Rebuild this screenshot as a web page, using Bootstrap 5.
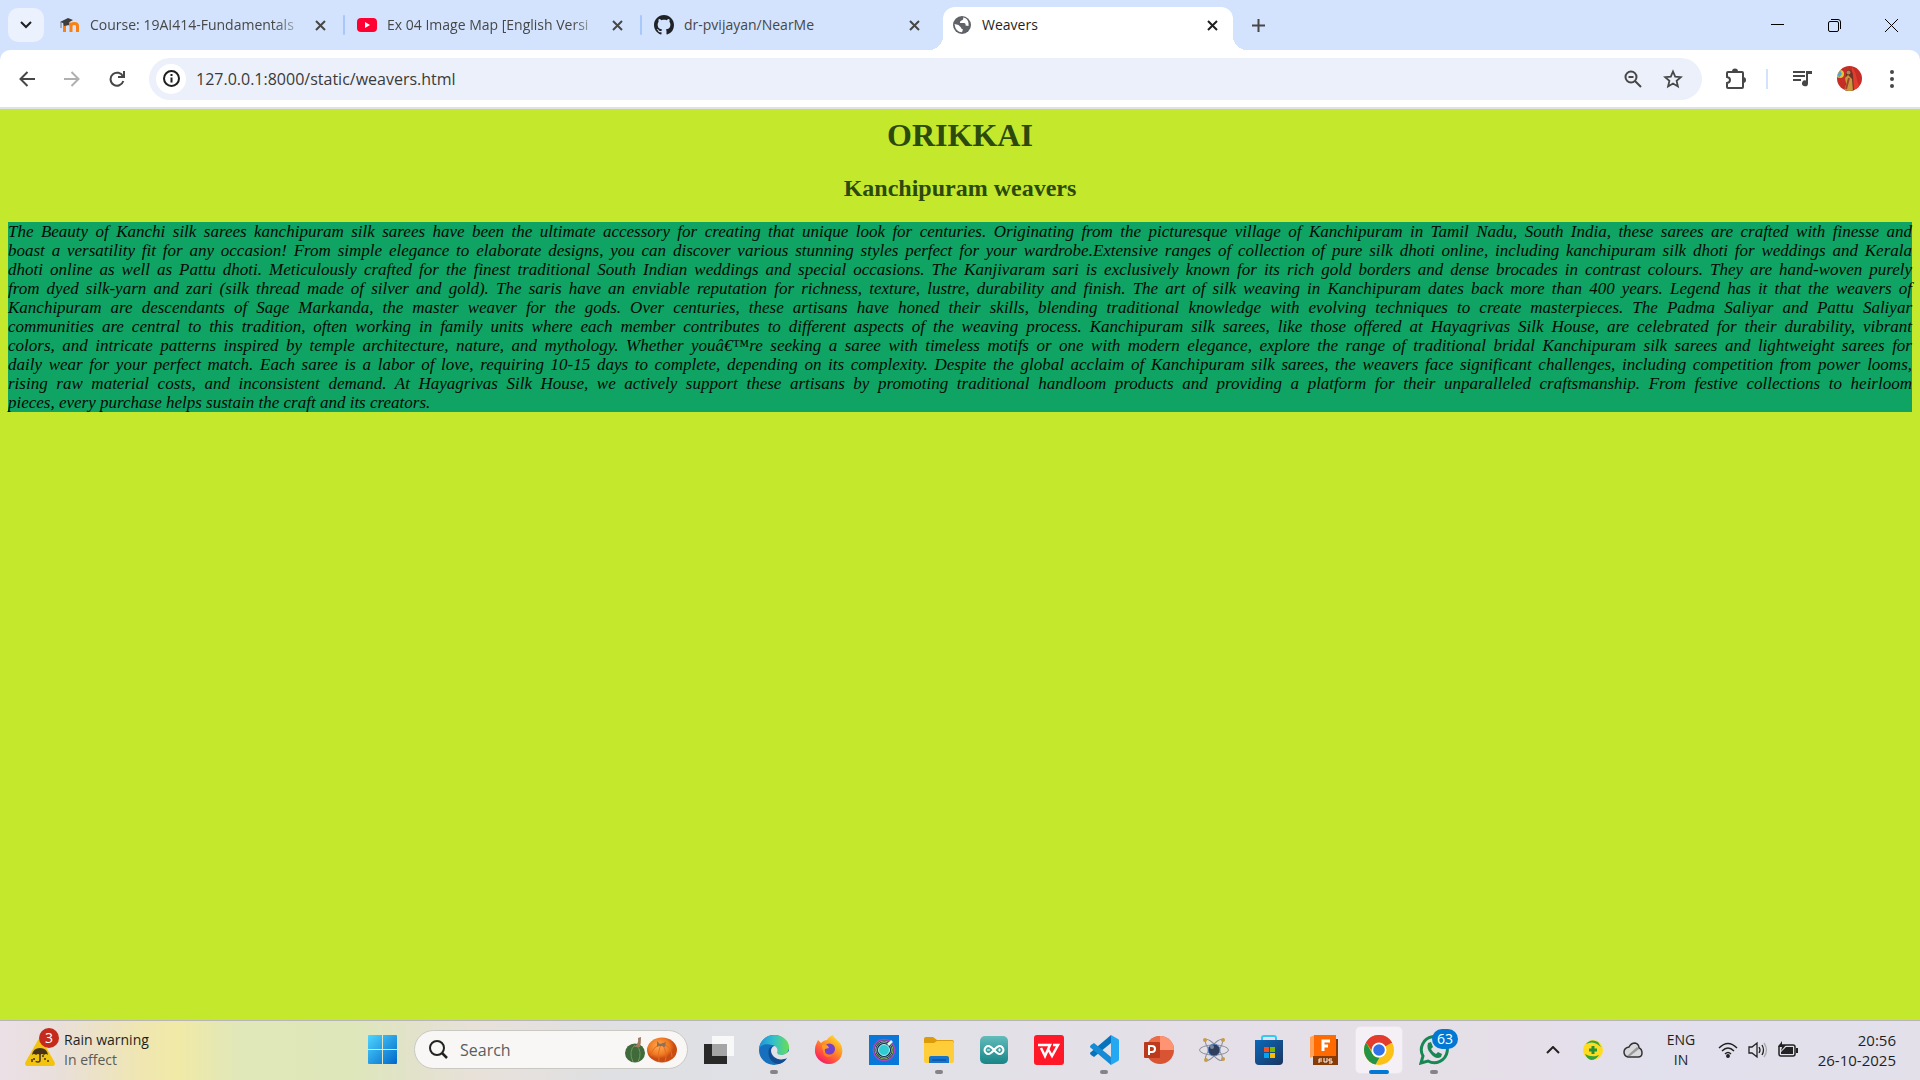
<!DOCTYPE html>
<html lang="en">
<head>
<meta charset="utf-8">
<meta name="viewport" content="width=device-width, initial-scale=1">
<title>Weavers</title>
<link rel="stylesheet" href="https://cdn.jsdelivr.net/npm/bootstrap@5.3.0/dist/css/bootstrap.min.css">
<style>
  body { font-family: "Open Sans", "Noto Sans", sans-serif; font-size: 14px; color: #1f1f1f; }
  svg { display: block; flex: none; }
  button { color: inherit; }
  .plain { border: 0; padding: 0; background: none; display: flex; align-items: center; justify-content: center; flex: none; }

  /* tab strip */
  .tabstrip { background: #d3e3fd; height: 50px; padding-left: 8px; }
  .tab-search { width: 36px; height: 34px; border-radius: 10px; background: #ebf1fd; margin: 8px 8px 0 0; }
  .page-tab { width: 297px; height: 50px; padding: 0 19px 0 8px; color: #474747; position: relative; }
  .page-tab + .page-tab:not(.current)::before { content: ""; width: 2px; height: 20px; background: #a8c7fa; border-radius: 1px; position: absolute; left: -6px; top: 15px; }
  .page-tab .plain { height: 50px; }
  .page-tab .title { flex: 1 1 0; min-width: 0; overflow: hidden; white-space: nowrap; text-align: left; line-height: 20px; }
  .page-tab .fades { -webkit-mask-image: linear-gradient(90deg, #000 88%, rgba(0, 0, 0, .2)); mask-image: linear-gradient(90deg, #000 88%, rgba(0, 0, 0, .2)); }
  .page-tab .open-tab { flex: 1 1 0; min-width: 0; gap: 10px; }
  .page-tab .close-tab { width: 20px; margin-left: 10px; }
  .current { width: 290px; height: 43px; background: #fff; color: #1f1f1f; border-radius: 12px 12px 0 0; padding-left: 9px; padding-right: 11px; align-self: flex-end; }
  .current .plain { height: 40px; padding-bottom: 4px; }
  .current::before, .current::after { content: ""; position: absolute; bottom: 0; width: 14px; height: 14px; }
  .current::before { left: -14px; background: radial-gradient(circle at 0 0, transparent 14px, #fff 14px); }
  .current::after { right: -14px; background: radial-gradient(circle at 100% 0, transparent 14px, #fff 14px); }
  .new-tab { width: 50px; height: 50px; }
  .window-btn { width: 57px; height: 50px; }

  /* toolbar */
  .corners { background: #d3e3fd; }
  .toolbar { background: #fff; height: 57px; border-radius: 10px 10px 0 0; padding: 0 6px 0 4px; }
  .nav-icon { width: 45px; height: 42px; color: #474747; }
  .omnibox { height: 42px; border-radius: 21px; background: #ecf0fa; margin: 0 14px 0 10px; padding: 0 9px 0 7px; }
  .site-info { width: 30px; height: 30px; border-radius: 50%; background: #fff; color: #1f1f1f; }
  .omnibox input { border: 0; outline: 0; background: none; flex: 1 1 0; min-width: 0; padding: 0; margin-left: 10px; font-size: 16px; line-height: 24px; color: #3a3a3a; }
  .omni-icon { width: 40px; height: 42px; color: #474747; }
  .divider { width: 2px; height: 20px; background: #d3e3fd; margin: 0 12px 0 10px; }
  .edge-line { height: 2px; background: #dfe1e5; }

  /* page */
  .page { background: #c4e82c; padding: 0 8px; color: #2c4a0c; overflow: hidden; }
  .page h1, .page h2 { font-family: "Liberation Serif", "Times New Roman", serif; font-weight: 700; text-align: center; margin: 0; }
  .page h1 { font-size: 32px; line-height: 37px; margin-top: 8px; }
  .page h2 { font-size: 24px; line-height: 28px; margin: 20px 0; }
  .page p { background: #10a464; color: #020a05; font-family: "Liberation Serif", Georgia, serif; font-style: italic; font-size: 17px; line-height: 19px; text-align: justify; text-align-last: justify; margin: 0; }
  .page .ending { display: block; text-align-last: left; }

  /* taskbar */
  .taskbar { height: 60px; padding-bottom: 2px; border-top: 1px solid #b9b3bb; background: linear-gradient(90deg, #ebe0e6 0, #e9dfda 60px, #efe6b2 140px, #f0eaa6 178px, #e1e7b8 235px, #dee7ba 350px, #e2e2cb 415px, #e8e1da 480px, #dee0e4 620px, #e2e1e7 900px, #e5dfe8 1300px, #e6dfe9 1520px, #e1e0ed 1650px, #e3e0ea 100%); font-size: 14px; line-height: 20px; }
  .weather { width: 355px; padding-left: 25px; gap: 9px; }
  .weather .muted { color: #5c5b55; }
  .weather-icon { position: relative; width: 30px; height: 40px; padding-top: 8px; }
  .count { position: absolute; border-radius: 10px; height: 20px; min-width: 20px; line-height: 20px; color: #fff; text-align: center; }
  .count-red { background: #c42b1c; left: 14px; top: -2px; }
  .count-blue { background: #0078d4; width: 26px; left: 26px; top: 9px; }
  .task { width: 55px; height: 59px; position: relative; }
  .task.running::after { content: ""; position: absolute; bottom: 5px; left: 24px; width: 8px; height: 4px; border-radius: 2px; background: #858387; }
  .task.focused::before { content: ""; position: absolute; left: 4px; top: 6px; width: 48px; height: 48px; border-radius: 5px; background: #f4f0f6; border: 1px solid #eae5ec; }
  .task.focused::after { width: 20px; left: 18px; background: #0078d4; }
  .task svg { position: relative; }
  .finder { width: 274px; height: 39px; border-radius: 20px; background: #f8f7f5; border: 1px solid #c9c8c3; margin: 0 3px 0 4px; padding: 0 10px 0 14px; }
  .finder input { border: 0; outline: 0; background: none; flex: 1 1 0; min-width: 0; font-size: 16px; line-height: 24px; padding: 0; margin-left: 12px; color: #5d5d5d; }
  .finder input::placeholder { color: #5d5d5d; opacity: 1; }
  .tray { padding-right: 24px; }
  .tray-app { width: 40px; height: 59px; }
  .language { width: 56px; text-align: center; }
  .quick { gap: 10px; margin-left: 9px; }
  .clock { width: 98px; text-align: right; font-size: 15px; }
</style>
<script src="https://cdn.jsdelivr.net/npm/bootstrap@5.3.0/dist/js/bootstrap.bundle.min.js"></script>
</head>
<body class="d-flex flex-column vh-100 overflow-hidden">

<header>
  <div class="tabstrip d-flex">
    <button class="plain tab-search" aria-label="Search tabs"><svg width="12" height="8" viewBox="0 0 12 8" fill="none" stroke="#1f1f1f" stroke-width="2"><path d="M1 1l5 5 5-5"/></svg></button>
    <div class="page-tab d-flex">
      <button class="plain open-tab">
        <svg width="20" height="20" viewBox="0 0 20 20"><path d="M4.500 17v-6q0-2.500 3.200-2.500 3.300 0 3.300 2.500v6m0-6q0-2.500 3.300-2.500 3.200 0 3.200 2.500v6" fill="none" stroke="#f98012" stroke-width="3"/><path d="M0 7l8-4 5 2-7 4zM3 8l6-1v3l-5 1z" fill="#3d3d3d"/><path d="M1 7v6" stroke="#777"/></svg>
        <span class="title fades">Course: 19AI414-Fundamentals</span></button>
      <button class="plain close-tab" aria-label="Close tab"><svg width="11" height="11" viewBox="0 0 11 11" stroke="currentColor" stroke-width="2"><path d="M1 1l9 9M10 1l-9 9"/></svg></button>
    </div>
    <div class="page-tab d-flex">
      <button class="plain open-tab">
        <svg width="20" height="14" viewBox="0 0 20 14"><rect width="20" height="14" rx="4" fill="#ff0033"/><path d="M8 4l5 3-5 3z" fill="#fff"/></svg>
        <span class="title fades">Ex 04 Image Map [English Versi</span></button>
      <button class="plain close-tab" aria-label="Close tab"><svg width="11" height="11" viewBox="0 0 11 11" stroke="currentColor" stroke-width="2"><path d="M1 1l9 9M10 1l-9 9"/></svg></button>
    </div>
    <div class="page-tab d-flex">
      <button class="plain open-tab">
        <svg width="20" height="20" viewBox="0 0 16 16" fill="#1f2328"><path d="M8 0C3.580 0 0 3.580 0 8c0 3.540 2.290 6.530 5.470 7.590.4.070.55-.17.55-.38 0-.19-.010-.820-.010-1.490-2.010.37-2.530-.49-2.690-.94-.09-.23-.48-.94-.82-1.130-.28-.15-.68-.52-.010-.53.63-.010 1.080.58 1.230.82.72 1.210 1.870.87 2.330.66.070-.52.28-.87.51-1.070-1.780-.2-3.640-.89-3.640-3.950 0-.87.31-1.590.82-2.150-.080-.2-.36-1.020.080-2.120 0 0 .67-.21 2.200.82.64-.18 1.320-.27 2-.27s1.360.090 2 .27c1.530-1.040 2.200-.82 2.200-.82.44 1.100.16 1.920.080 2.120.51.56.82 1.270.82 2.150 0 3.070-1.870 3.750-3.650 3.950.29.25.54.73.54 1.480 0 1.070-.010 1.930-.010 2.200 0 .21.15.46.55.38A8 8 0 0 0 16 8c0-4.420-3.580-8-8-8z"/></svg>
        <span class="title">dr-pvijayan/NearMe</span></button>
      <button class="plain close-tab" aria-label="Close tab"><svg width="11" height="11" viewBox="0 0 11 11" stroke="currentColor" stroke-width="2"><path d="M1 1l9 9M10 1l-9 9"/></svg></button>
    </div>
    <div class="page-tab current d-flex">
      <button class="plain open-tab">
        <svg width="20" height="20" viewBox="0 0 20 20"><circle cx="10" cy="10" r="9" fill="#5f6368"/><path d="M11 2.500q1 2-1.500 3-2 .5-1.500 2.500h4q2 0 1.500 2.500l3 .5q.5-5-2-7-1-1.200-3.500-1.500zM2.500 9l4 1 2.500 2.500q0 1.500 2 2l-1 2.800Q3.500 17 2.500 9z" fill="#fff"/></svg>
        <span class="title">Weavers</span></button>
      <button class="plain close-tab" aria-label="Close tab"><svg width="11" height="11" viewBox="0 0 11 11" stroke="currentColor" stroke-width="2"><path d="M1 1l9 9M10 1l-9 9"/></svg></button>
    </div>
    <button class="plain new-tab" aria-label="New tab"><svg width="13" height="13" viewBox="0 0 13 13" stroke="#474747" stroke-width="2"><path d="M6.500 0v13M0 6.500h13"/></svg></button>
    <div class="d-flex ms-auto">
      <button class="plain window-btn" aria-label="Minimize"><svg width="13" height="13" viewBox="0 0 13 13"><path d="M0 5.500h13" stroke="#000"/></svg></button>
      <button class="plain window-btn" aria-label="Restore"><svg width="13" height="13" viewBox="0 0 13 13" fill="none" stroke="#000"><rect x=".5" y="2.500" width="10" height="10" rx="1.500"/><path d="M3 .5h7a2.500 2.500 0 0 1 2.500 2.500v7"/></svg></button>
      <button class="plain window-btn" aria-label="Close"><svg width="13" height="13" viewBox="0 0 13 13" stroke="#000"><path d="M0 0l13 13M13 0L0 13"/></svg></button>
    </div>
  </div>

  <div class="corners">
  <div class="toolbar d-flex align-items-center">
    <button class="plain nav-icon" aria-label="Back"><svg width="16" height="16" viewBox="0 0 16 16" fill="none" stroke="currentColor" stroke-width="2"><path d="M16 8H2M8.500 1l-7 7 7 7"/></svg></button>
    <button class="plain nav-icon" aria-label="Forward" disabled><svg width="16" height="16" viewBox="0 0 16 16" fill="none" stroke="#b0b0b0" stroke-width="2"><path d="M0 8h14M7.500 1l7 7-7 7"/></svg></button>
    <button class="plain nav-icon" aria-label="Reload"><svg width="16" height="16" viewBox="0 0 16 16" fill="none" stroke="currentColor" stroke-width="2"><path d="M14 5.500A6.500 6.500 0 1 0 14.300 10M15 0v6H9"/></svg></button>
    <div class="omnibox d-flex align-items-center flex-grow-1">
      <button class="plain site-info" aria-label="Site information"><svg width="17" height="17" viewBox="0 0 17 17" fill="none" stroke="currentColor" stroke-width="2"><circle cx="8.500" cy="8.500" r="7.500"/><path d="M8.500 7.500v5M8.500 4v2"/></svg></button>
      <input type="text" aria-label="Address" value="127.0.0.1:8000/static/weavers.html">
      <button class="plain omni-icon" aria-label="Zoom"><svg width="18" height="18" viewBox="0 0 18 18" fill="none" stroke="currentColor" stroke-width="2"><circle cx="7" cy="7" r="5.500"/><path d="M11 11l6 6M4.500 7h5"/></svg></button>
      <button class="plain omni-icon" aria-label="Bookmark"><svg width="20" height="20" viewBox="0 0 20 20" fill="none" stroke="currentColor" stroke-width="1.800"><path d="M10 2.500l2.200 5.200 5.600.5-4.200 3.700 1.300 5.500-4.900-2.900-4.900 2.900 1.300-5.500-4.200-3.700 5.600-.5z"/></svg></button>
    </div>
    <button class="plain omni-icon" aria-label="Extensions"><svg width="22" height="22" viewBox="0 0 22 22"><path d="M3 4h14q1 0 1 1v14q0 1-1 1H3q-1 0-1-1v-4q3-.5 3-3t-3-3V5q0-1 1-1z" fill="none" stroke="#474747" stroke-width="2"/><path d="M7 3.500a3 3 0 0 1 6 0zM18 9a3 3 0 0 1 0 6z" fill="#474747"/></svg></button>
    <span class="divider"></span>
    <button class="plain nav-icon me-1" aria-label="Media controls"><svg width="20" height="18" viewBox="0 0 20 18"><path d="M0 2h12M0 6h12M0 10h8" stroke="#474747" stroke-width="2"/><path d="M13 1h6v3h-4v9.500a3 3 0 1 1-2-3z" fill="#474747"/></svg></button>
    <button class="plain omni-icon" aria-label="Profile"><svg width="25" height="25" viewBox="0 0 25 25"><defs><clipPath id="round"><circle cx="12.500" cy="12.500" r="12.500"/></clipPath></defs><g clip-path="url(#round)"><path fill="#c62d25" d="M0 0h25v25H0z"/><circle cx="3" cy="8" r="4" fill="#e7c33c"/><path d="M0 6l3-2 2 4-3 4z" fill="#55a7c6"/><path d="M15 1q4 5 5 13l3 9H15z" fill="#e33b2e"/><path d="M9 8q0-5 4-4 3 1 3 6l1 15H8z" fill="#6e3426"/><path d="M8 12l3-3 4 4 1 12H7l2-7z" fill="#c8983c"/><circle cx="11.500" cy="6.500" r="2" fill="#b88059"/><path d="M12 12l-3 11" stroke="#a6422b" stroke-width="2"/></g></svg></button>
    <button class="plain nav-icon" aria-label="Menu"><svg width="4" height="18" viewBox="0 0 4 18" fill="#474747"><circle cx="2" cy="2" r="2"/><circle cx="2" cy="9" r="2"/><circle cx="2" cy="16" r="2"/></svg></button>
  </div>
  </div>
  <div class="edge-line"></div>
</header>

<main class="page flex-grow-1">
  <h1>ORIKKAI</h1>
  <h2>Kanchipuram weavers</h2>
  <p>The Beauty of Kanchi silk sarees kanchipuram silk sarees have been the ultimate accessory for creating that unique look for centuries. Originating from the picturesque village of Kanchipuram in Tamil Nadu, South India, these sarees are crafted with finesse and<br>
  boast a versatility fit for any occasion! From simple elegance to elaborate designs, you can discover various stunning styles perfect for your wardrobe.Extensive ranges of collection of pure silk dhoti online, including kanchipuram silk dhoti for weddings and Kerala<br>
  dhoti online as well as Pattu dhoti. Meticulously crafted for the finest traditional South Indian weddings and special occasions. The Kanjivaram sari is exclusively known for its rich gold borders and dense brocades in contrast colours. They are hand-woven purely<br>
  from dyed silk-yarn and zari (silk thread made of silver and gold). The saris have an enviable reputation for richness, texture, lustre, durability and finish. The art of silk weaving in Kanchipuram dates back more than 400 years. Legend has it that the weavers of<br>
  Kanchipuram are descendants of Sage Markanda, the master weaver for the gods. Over centuries, these artisans have honed their skills, blending traditional knowledge with evolving techniques to create masterpieces. The Padma Saliyar and Pattu Saliyar<br>
  communities are central to this tradition, often working in family units where each member contributes to different aspects of the weaving process. Kanchipuram silk sarees, like those offered at Hayagrivas Silk House, are celebrated for their durability, vibrant<br>
  colors, and intricate patterns inspired by temple architecture, nature, and mythology. Whether youâ€™re seeking a saree with timeless motifs or one with modern elegance, explore the range of traditional bridal Kanchipuram silk sarees and lightweight sarees for<br>
  daily wear for your perfect match. Each saree is a labor of love, requiring 10-15 days to complete, depending on its complexity. Despite the global acclaim of Kanchipuram silk sarees, the weavers face significant challenges, including competition from power looms,<br>
  rising raw material costs, and inconsistent demand. At Hayagrivas Silk House, we actively support these artisans by promoting traditional handloom products and providing a platform for their unparalleled craftsmanship. From festive collections to heirloom
  <span class="ending">pieces, every purchase helps sustain the craft and its creators.</span></p>
</main>

<footer class="taskbar d-flex align-items-center flex-shrink-0">
  <button class="plain weather justify-content-start text-start">
    <span class="weather-icon"><svg width="30" height="28" viewBox="0 0 30 28"><path d="M13 2q2-3 4 0l12.500 22q1.500 4-2 4h-25q-3.500 0-2-4z" fill="#f2c40f"/><path d="M7 17q1-7 8-7t8 7q-2-2-4 0-2-2-4 0-2-2-4 0-2-2-4 0z" fill="#45331a"/><path d="M15 16v6q0 2-2 2t-2-1M9 20v2M20 20v2M23 22v2M18 17v2M7 21v3" fill="none" stroke="#45331a" stroke-width="1.500"/></svg><span class="count count-red">3</span></span>
    <span>Rain warning<br><span class="muted">In effect</span></span>
  </button>
  <button class="plain task" aria-label="Start"><svg width="29" height="29" viewBox="0 0 29 29"><defs><linearGradient id="win" x1="0" y1="0" x2="1" y2="1"><stop stop-color="#4fd5ff"/><stop offset="1" stop-color="#0067c9"/></linearGradient></defs><path d="M1 0h13v14H0V1q0-1 1-1zM15 0h13q1 0 1 1v13H15zM0 15h14v14H1q-1 0-1-1zM15 15h14v13q0 1-1 1H15z" fill="url(#win)"/></svg></button>
  <label class="finder d-flex align-items-center">
    <svg width="19" height="19" viewBox="0 0 19 19" fill="none" stroke="#222" stroke-width="2"><circle cx="8" cy="8" r="7"/><path d="M13 13l5 5" stroke-width="2.500"/></svg>
    <input type="search" placeholder="Search" aria-label="Search">
    <svg width="52" height="27" viewBox="0 0 52 27"><defs><radialGradient id="pk" cx=".4" cy=".35"><stop stop-color="#ffae55"/><stop offset=".7" stop-color="#f07822"/><stop offset="1" stop-color="#c94d12"/></radialGradient></defs><ellipse cx="10" cy="17" rx="10" ry="9.500" fill="#3f6b3b"/><path d="M10 9q-7 6-2 17M11 9q7 6 2 17" fill="none" stroke="#78935b"/><path d="M9 11q5-3 4-9l3-1q0 6-1 10z" fill="#a27961"/><ellipse cx="37" cy="14" rx="15" ry="12.500" fill="url(#pk)"/><path d="M36 8q-9 3-10 12M36 8q-4 8-2 18M37 8q6 8 3 18M38 8q9 3 9 13" fill="none" stroke="#e56d20"/><path d="M32 5l3 3 6-2-1 5q-5-2-8 0z" fill="#8e7257"/></svg>
  </label>
  <button class="plain task" aria-label="Task view"><svg width="30" height="28" viewBox="0 0 30 28"><path d="M0 8h23v20H0z" fill="#292929"/><path d="M8 0h22v20H8z" fill="#f8f8f8"/><path d="M8 8h15v12H8z" fill="#a5a5a5"/></svg></button>
  <button class="plain task running" aria-label="Edge"><svg width="30" height="30" viewBox="0 0 30 30"><defs><linearGradient id="eg"><stop stop-color="#1b93db"/><stop offset=".5" stop-color="#35c1c9"/><stop offset="1" stop-color="#6ade50"/></linearGradient></defs><circle cx="15" cy="15" r="15" fill="#1670bd"/><path d="M0 14C1 5 8 0 15 0c9 0 15 6 15 12 0 5-4 8-8 8-4 0-5-1-4-3 1-1 1-6-5-7C7 8 1 10 0 14z" fill="url(#eg)"/><path d="M10 14c-2 5 1 15 10 15 4-1 7-4 8-6-8 4-16-1-16-7 0-3 3-4 3-4-2-1-4 0-5 2z" fill="#124c92"/><path d="M12 15q1-4 4-4 4 3 2 7 1 2 4 2 4 0 8-4v6l-2 1C20 27 12 22 12 15z" fill="#e2e1e6"/></svg></button>
  <button class="plain task" aria-label="Firefox"><svg width="30" height="30" viewBox="0 0 30 30"><defs><linearGradient id="ff" x1=".9" y1="0" x2=".2" y2="1"><stop stop-color="#ffea35"/><stop offset=".4" stop-color="#ff9a22"/><stop offset=".8" stop-color="#ff3b4c"/><stop offset="1" stop-color="#e3157c"/></linearGradient></defs><path d="M19 0c1 4 8 6 9 13 2 9-5 16-13 16S0 22 1 14c0-4 2-6 3-9l3 3c2-2 4-3 6-3 1-2 3-4 6-5z" fill="url(#ff)"/><path d="M10 9q2 2 4 2-3 2-2 5 4 3 7-1 1 6-4 7-6 0-6-6z" fill="#ff7b1d"/><circle cx="15.500" cy="14" r="5.500" fill="#7440ce"/><path d="M8 10q3-2 6 1l1 2-4 1q-1 3 1 4-4-1-4-8z" fill="#ff9c1e"/></svg></button>
  <button class="plain task" aria-label="Camera app"><svg width="30" height="30" viewBox="0 0 30 30"><path fill="#0877d8" d="M0 0h30v30H0z"/><circle cx="15" cy="15" r="10.500" fill="#122d4c" stroke="#aa46c7" stroke-width="1.500"/><circle cx="15" cy="15" r="9" fill="none" stroke="#7fb84e"/><circle cx="15" cy="15" r="7.500" fill="none" stroke="#8b98a2"/><circle cx="15" cy="15" r="5.500" fill="#31cbd4" stroke="#aaf1ed"/><path d="M19 10l4-4" stroke="#e4f6f8" stroke-width="2.500"/></svg></button>
  <button class="plain task running" aria-label="File Explorer"><svg width="30" height="26" viewBox="0 0 30 26"><path d="M0 2q0-2 2-2h7l4 3h15q2 0 2 2v4H0z" fill="#dc9b08"/><path d="M0 6h10l3-2h15q2 0 2 2v18q0 2-2 2H2q-2 0-2-2z" fill="#ffcd3a"/><path d="M5 26v-5q0-2 2-2h16q2 0 2 2v5z" fill="#1674cc"/><path d="M8 23h14" stroke="#0a4588"/></svg></button>
  <button class="plain task" aria-label="Arduino"><svg width="28" height="28" viewBox="0 0 28 28"><defs><linearGradient id="ar" x1="0" y1="0" x2="0" y2="1"><stop stop-color="#62bcba"/><stop offset="1" stop-color="#188587"/></linearGradient></defs><rect width="28" height="28" rx="5" fill="url(#ar)"/><path d="M14 14q-5-6-8-3-3 3 0 6 3 3 8-3 5-6 8-3 3 3 0 6-3 3-8-3z" fill="none" stroke="#fff" stroke-width="2"/><path d="M7 14h3M18 14h3M19.500 12.500v3" stroke="#fff"/></svg></button>
  <button class="plain task" aria-label="WPS Office"><svg width="30" height="30" viewBox="0 0 30 30"><rect width="30" height="30" rx="3" fill="#ff1828"/><path d="M4 10h12l-5 11L7 13M14 14l4 7 6-11h-5" fill="none" stroke="#fff" stroke-width="2.500"/></svg></button>
  <button class="plain task running" aria-label="Visual Studio Code"><svg width="30" height="30" viewBox="0 0 30 30"><path d="M22 0l7 4q1 0 1 2v18q0 2-1 2l-7 4z" fill="#25a8f2"/><path d="M2 20q-2-2 0-3L22 0v8L5 22z" fill="#0873bd"/><path d="M2 10q-2 2 0 3l20 17v-8L5 8z" fill="#168bd5"/></svg></button>
  <button class="plain task" aria-label="PowerPoint"><svg width="30" height="28" viewBox="0 0 30 28"><circle cx="16" cy="14" r="14" fill="#d95432"/><path d="M16 0a14 14 0 0 0-14 14h14z" fill="#ed6c47"/><path d="M16 0a14 14 0 0 1 14 14H16z" fill="#ff9472"/><rect y="6" width="16" height="16" rx="1" fill="#bd391b"/><path d="M5 19v-9h3q3 0 3 3t-3 3H5" fill="none" stroke="#fff" stroke-width="2"/></svg></button>
  <button class="plain task" aria-label="Atom simulator"><svg width="30" height="24" viewBox="0 0 30 24" fill="none" stroke="#8b8f99"><ellipse cx="15" cy="12" rx="14.500" ry="5"/><ellipse cx="15" cy="12" rx="13" ry="4" transform="rotate(52 15 12)"/><ellipse cx="15" cy="12" rx="13" ry="4" transform="rotate(-52 15 12)"/><circle cx="15" cy="12" r="6" fill="#30405c" stroke="#5a83c8"/><circle cx="13" cy="9" r="2" fill="#7a899b" stroke="none"/><g fill="#c69c45" stroke="none"><circle cx="6" cy="2" r="2"/><circle cx="24" cy="2" r="2"/><circle cx="7" cy="22" r="2"/><circle cx="24" cy="21" r="2"/></g></svg></button>
  <button class="plain task" aria-label="Microsoft Store"><svg width="30" height="30" viewBox="0 0 30 30"><defs><linearGradient id="st" x1="0" y1="0" x2="1" y2="1"><stop stop-color="#0b69ba"/><stop offset="1" stop-color="#1b3560"/></linearGradient></defs><path d="M8 6V3q0-2 2-2h10q2 0 2 2v3" fill="none" stroke="#35c8f4" stroke-width="2"/><path d="M1 5h28v21q0 4-4 4H5q-4 0-4-4z" fill="url(#st)"/><path fill="#f25022" d="M10 12h5v5h-5z"/><path fill="#7fba00" d="M16 12h5v5h-5z"/><path fill="#00a4ef" d="M10 18h5v5h-5z"/><path fill="#ffb900" d="M16 18h5v5h-5z"/></svg></button>
  <button class="plain task" aria-label="Fusion"><svg width="28" height="30" viewBox="0 0 28 30"><path d="M0 2l5-2v21l-5 2z" fill="#ffa257"/><path d="M4 0h22v22H4z" fill="#ff6b00"/><path d="M3 21h23V4h2v26H3z" fill="#883b05"/><path d="M13 16V6h7M12 11h6" stroke="#fff" stroke-width="3" fill="none"/><path d="M9 28v-4h3M9 26h3M14 23v4h3v-4M22 24h-3v2h3v2h-3" stroke="#fff" fill="none"/></svg></button>
  <button class="plain task running focused" aria-label="Chrome"><svg width="30" height="30" viewBox="0 0 30 30"><circle cx="15" cy="15" r="15" fill="#fbc116"/><path d="M15 15L2 7.500a15 15 0 0 1 26 0z" fill="#e33b2e"/><path d="M2 7.500L10 19l5-11h13a15 15 0 0 0-26-.5z" fill="#e33b2e"/><path d="M2 7.500L8.500 19q2 4 7 3.500L11.500 29.500A15 15 0 0 1 2 7.500z" fill="#219447"/><circle cx="15" cy="15" r="7.500" fill="#fff"/><circle cx="15" cy="15" r="5.800" fill="#3272e8"/></svg></button>
  <button class="plain task running" aria-label="WhatsApp"><svg width="30" height="30" viewBox="0 0 30 30"><path d="M2 28l2-7a13 13 0 1 1 5 5z" fill="none" stroke="#198754" stroke-width="3"/><path d="M9 8l3-1 2 5-2 2q2 4 5 5l2-2 4 2-1 3q-5 3-10-3-5-5-3-11z" fill="#198754"/></svg><span class="count count-blue">63</span></button>

  <div class="tray d-flex align-items-center ms-auto">
    <button class="plain tray-app" aria-label="Show hidden icons"><svg width="14" height="8" viewBox="0 0 14 8" fill="none" stroke="#222" stroke-width="2"><path d="M1 7l6-6 6 6"/></svg></button>
    <button class="plain tray-app" aria-label="Security"><svg width="20" height="20" viewBox="0 0 20 20"><circle cx="10" cy="10" r="10" fill="#ffdc20"/><path d="M3 4q5-6 12-2l3 5-4-3Q9 1 3 4zM2 14q5 3 11 2l3-1q-3 5-8 5-4-1-6-6z" fill="#36a33c"/><path d="M10 6v8M6 10h8" stroke="#269233" stroke-width="3"/></svg></button>
    <button class="plain tray-app" aria-label="OneDrive"><svg width="20" height="16" viewBox="0 0 20 16"><path d="M5 15Q1 14 1 10t5-5q2-4 6-4 4 1 4 5 3 1 3 5t-4 4z" fill="#d9d9dc" stroke="#333" stroke-width="1.500"/><path d="M4 14L14 5l2 2-9 7z" fill="#999"/></svg></button>
    <div class="language">ENG<br>IN</div>
    <button class="plain quick" aria-label="Network, sound, battery">
      <svg width="20" height="16" viewBox="0 0 20 16" fill="none" stroke="#222" stroke-width="1.500"><path d="M1 6q9-9 18 0M4 9q6-6 12 0M7 12q3-3 6 0"/><circle cx="10" cy="14" r="1.200" fill="#222"/></svg>
      <svg width="20" height="18" viewBox="0 0 20 18" fill="none" stroke="#222" stroke-width="1.300"><path d="M1 6h3l5-4v14l-5-4H1zM11 6q2 3 0 6M14 4q3 5 0 10"/><path d="M16 2q5 7 0 14" stroke="#aaa"/></svg>
      <svg width="20" height="17" viewBox="0 0 20 17"><rect x="1" y="4" width="16" height="11" rx="2" fill="none" stroke="#222" stroke-width="1.500"/><path d="M8 6h7v7H3v-2zM18 7h2v5h-2zM4 0v4h4l-5 6 1-4H0z" fill="#222"/></svg>
    </button>
    <div class="clock">20:56<br>26-10-2025</div>
  </div>
</footer>
</body>
</html>
